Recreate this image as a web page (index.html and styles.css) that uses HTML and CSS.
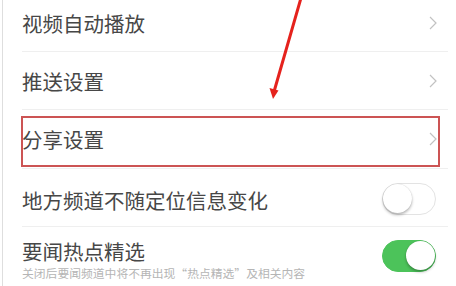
FILE: index.html
```html
<!DOCTYPE html>
<html lang="zh-CN">
<head>
<meta charset="utf-8">
<title>设置</title>
<link rel="stylesheet" href="styles.css">
</head>
<body>
<div class="page">
  <ul class="list">
    <li class="row">
      <span class="label">视频自动播放</span>
      <svg class="chev" width="8" height="14" viewBox="0 0 8 14"><polyline points="1,1 7,7 1,13" fill="none" stroke="#c2c2c2" stroke-width="1.2"/></svg>
    </li>
    <li class="row">
      <span class="label">推送设置</span>
      <svg class="chev" width="8" height="14" viewBox="0 0 8 14"><polyline points="1,1 7,7 1,13" fill="none" stroke="#c2c2c2" stroke-width="1.2"/></svg>
    </li>
    <li class="row row-tall">
      <span class="label">分享设置</span>
      <svg class="chev" width="8" height="14" viewBox="0 0 8 14"><polyline points="1,1 7,7 1,13" fill="none" stroke="#c2c2c2" stroke-width="1.2"/></svg>
    </li>
    <li class="row">
      <span class="label label-low">地方频道不随定位信息变化</span>
      <span class="toggle"><span class="knob"></span></span>
    </li>
    <li class="row row-last">
      <div class="textblock">
        <span class="label">要闻热点精选</span>
        <span class="sub">关闭后要闻频道中将不再出现“热点精选”及相关内容</span>
      </div>
      <span class="toggle on"><span class="knob"></span></span>
    </li>
  </ul>
  <div class="highlight"></div>
  <svg class="arrow" width="456" height="286" viewBox="0 0 456 286">
    <line x1="301" y1="-2" x2="274.5" y2="90" stroke="#e5221d" stroke-width="3" stroke-linecap="round"/>
    <polygon points="273,99 269.5,88 278.5,90.5" fill="#e5221d"/>
  </svg>
</div>
</body>
</html>
```
FILE: styles.css
```css
html, body {
  margin: 0;
  padding: 0;
  background: #ffffff;
}

body {
  font-family: "Noto Sans CJK SC", "Noto Sans", sans-serif;
  color: #444444;
  overflow: hidden;
  width: 456px;
  height: 286px;
}

.page {
  position: relative;
  margin-left: 2px;
  border-left: 1px solid #dedede;
  height: 286px;
  overflow: hidden;
}

.list {
  list-style: none;
  margin: -6px 0 0 0;
  padding: 0;
}

.row {
  display: flex;
  align-items: center;
  justify-content: space-between;
  height: 57px;
  margin-left: 19px;
  margin-right: 8px;
  border-bottom: 1px solid #efefef;
}

.row-tall {
  height: 58px;
}

.row-last {
  border-bottom: none;
  height: 60px;
}

.label {
  font-size: 20.5px;
  line-height: 24px;
  color: #474747;
  white-space: nowrap;
}

.label-low {
  position: relative;
  top: 2px;
}

.chev {
  margin-right: 11px;
  display: block;
}

.textblock {
  display: flex;
  flex-direction: column;
  padding-top: 5px;
}

.sub {
  font-size: 11.8px;
  line-height: 14px;
  color: #b5b5b5;
  margin-top: 3px;
  white-space: nowrap;
}

.toggle {
  position: relative;
  width: 54px;
  height: 32px;
  box-sizing: border-box;
  border-radius: 16px;
  border: 1.5px solid #e3e3e3;
  background: #ffffff;
  margin-right: 12px;
  margin-top: 3px;
}

.toggle .knob {
  position: absolute;
  top: 0;
  left: 0;
  width: 29px;
  height: 29px;
  border-radius: 50%;
  background: #ffffff;
  box-shadow: 0 2px 3px rgba(0, 0, 0, 0.28), 0 0 1px rgba(0, 0, 0, 0.2);
}

.toggle.on {
  background: #4cc35a;
  border-color: #4cc35a;
  margin-top: -3px;
}

.toggle.on .knob {
  left: auto;
  right: 0;
}

.highlight {
  position: absolute;
  left: 18px;
  top: 116px;
  width: 419px;
  height: 51px;
  box-sizing: border-box;
  border: 2px solid #cc5454;
}

.arrow {
  position: absolute;
  left: -3px;
  top: 0;
}
```
